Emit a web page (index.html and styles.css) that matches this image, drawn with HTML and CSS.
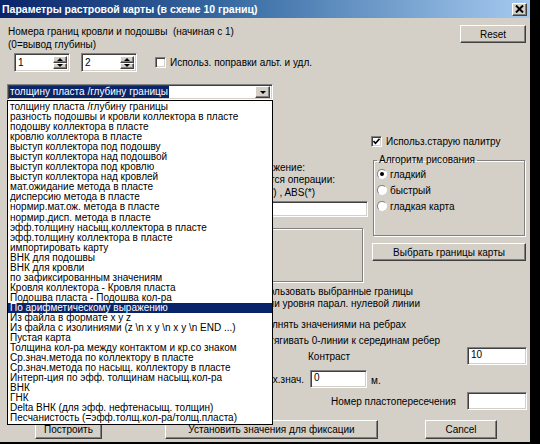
FILE: index.html
```html
<!DOCTYPE html>
<html lang="ru">
<head>
<meta charset="utf-8">
<title>Параметры растровой карты</title>
<link rel="stylesheet" href="styles.css">
</head>
<body>
<div class="window">
  <div class="titlebar">
    <span class="title">Параметры растровой карты (в схеме 10 границ)</span>
    <span class="close raised"><svg width="9" height="8" viewBox="0 0 9 8"><path d="M1 0.5 L8 7.5 M8 0.5 L1 7.5" stroke="#000" stroke-width="2"/></svg></span>
  </div>
  <div class="client">
    <div class="row-head">
      <div class="head-text">
        <div>Номера границ кровли и подошвы&nbsp; (начиная с 1)</div>
        <div>(0=вывод глубины)</div>
      </div>
      <div class="btn raised btn-reset">Reset</div>
    </div>
    <div class="row-spin">
      <div class="spin sunken spin1"><span class="spin-val">1</span><span class="spin-btns"><span class="sb raised"><i class="tri-up"></i></span><span class="sb raised"><i class="tri-down"></i></span></span></div>
      <div class="spin sunken spin2"><span class="spin-val">2</span><span class="spin-btns"><span class="sb raised"><i class="tri-up"></i></span><span class="sb raised"><i class="tri-down"></i></span></span></div>
      <div class="check check-corr"><span class="cb sunken"></span>Использ. поправки альт. и удл.</div>
    </div>
    <div class="combo sunken"><span class="combo-sel">толщину пласта /глубину границы</span><span class="combo-btn raised"><i class="tri-down"></i></span></div>
    <div class="sect-a">
      <div class="mid-col">
        <div class="ml l1">Арифметическое выражение:</div>
        <div class="ml l2">Допускаются операции:</div>
        <div class="ml l3">+, -, *, /, SQRT(*) , ABS(*)</div>
        <div class="field sunken expr"></div>
        <div class="panel"></div>
      </div>
      <div class="right-col">
        <div class="check chk-pal"><span class="cb sunken checked"><svg width="7" height="7" viewBox="0 0 7 7"><path d="M0.5 3 L2.5 5.2 L6.5 0.8" fill="none" stroke="#000" stroke-width="1.6"/></svg></span>Использ.старую палитру</div>
        <fieldset class="group">
          <legend>Алгоритм рисования</legend>
          <div class="radio"><span class="rb on"></span>гладкий</div>
          <div class="radio"><span class="rb"></span>быстрый</div>
          <div class="radio"><span class="rb"></span>гладкая карта</div>
        </fieldset>
        <div class="btn raised btn-bounds">Выбрать границы карты</div>
      </div>
    </div>
    <div class="sect-b">
      <div class="b-row b1"><span class="cb sunken"></span>Использовать выбранные границы</div>
      <div class="b-row b2"><span class="cb sunken"></span>Построение изолинии уровня парал. нулевой линии</div>
      <div class="b-row b3"><span class="cb sunken"></span>Заполнять значениями на ребрах</div>
      <div class="b-row b4"><span class="cb sunken"></span>Притягивать 0-линии к серединам ребер</div>
      <div class="f-row b5"><span class="lbl-contrast">Контраст</span><span class="field sunken inp-right">10</span></div>
      <div class="f-row b6"><span class="lbl-shag">Шаг вых.знач.</span><span class="field sunken inp-shag">0</span><span class="unit">м.</span></div>
      <div class="f-row b7"><span class="lbl-nomer">Номер пластопересечения</span><span class="field sunken inp-right"></span></div>
      <div class="btn-row">
        <div class="btn raised btn-build">Построить</div>
        <div class="btn raised btn-fix">Установить значения для фиксации</div>
        <div class="btn raised btn-cancel">Cancel</div>
      </div>
    </div>
  </div>
  <ul class="dropdown">
    <li>толщину пласта /глубину границы</li>
    <li>разность подошвы и кровли коллектора в пласте</li>
    <li>подошву коллектора в пласте</li>
    <li>кровлю коллектора в пласте</li>
    <li>выступ коллектора под подошву</li>
    <li>выступ коллектора над подошвой</li>
    <li>выступ коллектора под кровлю</li>
    <li>выступ коллектора над кровлей</li>
    <li>мат.ожидание метода в пласте</li>
    <li>дисперсию метода в пласте</li>
    <li>нормир.мат.ож. метода в пласте</li>
    <li>нормир.дисп. метода в пласте</li>
    <li>эфф.толщину насыщ.коллектора в пласте</li>
    <li>эфф.толщину коллектора в пласте</li>
    <li>импортировать карту</li>
    <li>ВНК для подошвы</li>
    <li>ВНК для кровли</li>
    <li>по зафиксированным значениям</li>
    <li>Кровля коллектора - Кровля пласта</li>
    <li>Подошва пласта - Подошва кол-ра</li>
    <li class="sel">По арифметическому выражению</li>
    <li>Из файла в формате x y z</li>
    <li>Из файла с изолиниями (z \n x y \n x y \n END ...)</li>
    <li>Пустая карта</li>
    <li>Толщина кол-ра между контактом и кр.со знаком</li>
    <li>Ср.знач.метода по коллектору в пласте</li>
    <li>Ср.знач.метода по насыщ. коллектору в пласте</li>
    <li>Интерп-ция по эфф. толщинам насыщ.кол-ра</li>
    <li>ВНК</li>
    <li>ГНК</li>
    <li>Delta ВНК (для эфф. нефтенасыщ. толщин)</li>
    <li>Песчанистость (=эфф.толщ.кол-ра/толщ.пласта)</li>
  </ul>
</div>
</body>
</html>
```
FILE: styles.css
```css
* { box-sizing: border-box; }
html, body { margin: 0; padding: 0; }
body {
  background: #000;
  width: 540px;
  height: 444px;
  overflow: hidden;
  font-family: "Liberation Sans", Arial, sans-serif;
  font-size: 10px;
  color: #000;
}
.window {
  position: relative;
  width: 530px;
  height: 442px;
  background: #d4d0c8;
}
.raised {
  background: #d4d0c8;
  border: 1px solid;
  border-color: #fff #404040 #404040 #fff;
  box-shadow: inset -1px -1px #808080;
}
.sunken {
  background: #fff;
  border: 1px solid;
  border-color: #808080 #fff #fff #808080;
  box-shadow: inset 1px 1px #404040, inset -1px -1px #d4d0c8;
}
.titlebar {
  height: 18px;
  background: linear-gradient(to right, #0a246a 0%, #3a6ea5 45%, #a6caf0 100%);
  display: flex;
  align-items: center;
  padding: 0 3px 0 2px;
}
.title {
  color: #fff;
  font-weight: bold;
  font-size: 10.5px;
  white-space: nowrap;
}
.close {
  margin-left: auto;
  width: 15px;
  height: 13px;
  display: flex;
  align-items: center;
  justify-content: center;
}
.close svg { display: block; }
.client { display: flex; flex-direction: column; }
.btn {
  display: flex;
  align-items: center;
  justify-content: center;
  white-space: nowrap;
}
.row-head { display: flex; margin-top: 7px; height: 26px; }
.head-text { padding-left: 8px; line-height: 13px; }
.btn-reset { margin-left: auto; margin-right: 4px; width: 66px; height: 18px; }
.row-spin { display: flex; align-items: center; margin-top: 2px; height: 19px; }
.spin { width: 56px; height: 19px; display: flex; padding: 2px 2px 2px 0; }
.spin1 { margin-left: 14px; }
.spin2 { margin-left: 11px; }
.spin-val { flex: 1; padding-left: 3px; line-height: 14px; }
.spin-btns { width: 14px; display: flex; flex-direction: column; }
.sb { flex: 1; display: flex; align-items: center; justify-content: center; }
.tri-up, .tri-down { display: block; width: 0; height: 0; border-left: 3px solid transparent; border-right: 3px solid transparent; }
.tri-up { border-bottom: 3px solid #000; }
.tri-down { border-top: 3px solid #000; }
.check { display: flex; align-items: center; white-space: nowrap; }
.cb { width: 11px; height: 11px; margin-right: 4px; flex: none; display: flex; align-items: center; justify-content: center; }
.cb svg { display: block; }
.check-corr { margin-left: 18px; }
.combo {
  margin: 12px 0 0 7px;
  width: 266px;
  height: 16px;
  display: flex;
  align-items: center;
  padding: 1px 2px 1px 1px;
}
.combo-sel { background: #0a246a; color: #fff; padding: 0 1px; line-height: 12px; white-space: nowrap; }
.combo-btn { margin-left: auto; width: 15px; height: 12px; display: flex; align-items: center; justify-content: center; }
.sect-a { display: flex; height: 182px; }
.mid-col { width: 361px; margin-left: 7px; display: flex; flex-direction: column; align-items: flex-end; }
.ml { line-height: 12px; white-space: nowrap; }
.l1 { margin-top: 62px; margin-right: 63px; }
.l2 { margin-right: 33px; }
.l3 { margin-top: 1px; margin-right: 53px; }
.expr { margin-top: 2px; width: 228px; height: 16px; }
.panel {
  margin-top: 11px;
  margin-right: 5px;
  width: 223px;
  height: 54px;
  border: 1px solid #808080;
  box-shadow: 1px 1px 0 #fff, inset 1px 1px 0 #fff;
}
.right-col { width: 154px; margin-left: 4px; display: flex; flex-direction: column; }
.chk-pal { margin-top: 35px; margin-left: -1px; height: 12px; }
.group {
  margin: 7px 1px 0 1px;
  padding: 0 0 19px 0;
  border: 1px solid #808080;
  box-shadow: inset 1px 1px 0 #fff, 1px 1px 0 #fff;
  min-width: 0;
}
.group legend { margin-left: 3px; padding: 0 2px; line-height: 12px; }
.radio { display: flex; align-items: center; height: 12px; margin: 2px 0 4px 3px; white-space: nowrap; }
.rb {
  width: 10px; height: 10px; border-radius: 50%;
  background: #fff;
  border: 1px solid #808080;
  border-right-color: #fff; border-bottom-color: #fff;
  box-shadow: 0 0 0 0.5px #d4d0c8;
  margin-right: 3px;
  display: flex; align-items: center; justify-content: center;
  flex: none;
}
.rb.on::after { content: ""; width: 4px; height: 4px; border-radius: 50%; background: #000; }
.btn-bounds { margin-top: 7px; height: 18px; width: 154px; }
.sect-b { display: flex; flex-direction: column; }
.b-row { display: flex; justify-content: flex-end; align-items: center; height: 12px; line-height: 12px; white-space: nowrap; }
.b1 { margin-top: 4px; padding-right: 117px; }
.b2 { padding-right: 110px; }
.b3 { margin-top: 9px; padding-right: 124px; }
.b4 { margin-top: 4px; padding-right: 90px; }
.f-row { display: flex; align-items: center; height: 18px; white-space: nowrap; }
.field { display: block; line-height: 14px; padding-left: 3px; }
.lbl-contrast { padding-left: 308px; }
.inp-right { margin-left: auto; margin-right: 3px; width: 60px; height: 18px; }
.b6 { margin-top: 5px; }
.lbl-shag { width: 304px; text-align: right; }
.inp-shag { margin-left: 6px; width: 57px; height: 18px; }
.unit { margin-left: 4px; padding-top: 2px; }
.b7 { margin-top: 4px; }
.lbl-nomer { padding-left: 331px; }
.btn-row { display: flex; margin-top: 10px; height: 19px; }
.btn-build { margin-left: 35px; width: 67px; }
.btn-fix { margin-left: 63px; width: 213px; }
.btn-cancel { margin-left: 47px; width: 72px; }
.dropdown {
  position: absolute;
  left: 7px;
  top: 100px;
  width: 266px;
  height: 325px;
  margin: 0;
  padding: 1px 0 0 0;
  list-style: none;
  background: #fff;
  border: 1px solid #000;
  overflow: hidden;
}
.dropdown li { height: 10.05px; line-height: 10px; padding-left: 2px; white-space: nowrap; }
.dropdown li.sel { background: #0a246a; color: #fff; }
```
